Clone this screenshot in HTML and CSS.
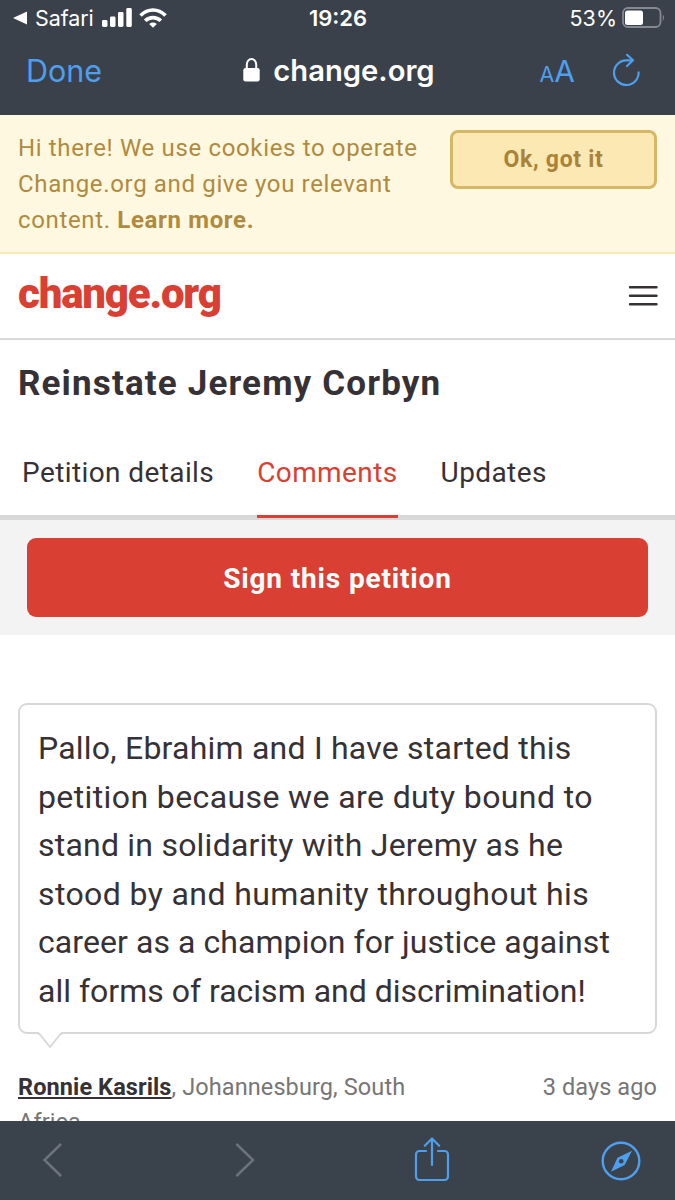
FILE: index.html
```
<!DOCTYPE html>
<html lang="en">
<head>
  <meta charset="UTF-8">
  <meta name="viewport" content="width=device-width, initial-scale=1.0">
  <title>Reinstate Jeremy Corbyn</title>
  <link rel="stylesheet" href="styles.css">
</head>
<body>
  <div class="browser-top">
    <div class="status-bar">
      <div class="status-left">
        <svg width="14" height="14" viewBox="0 0 14 14"><path d="M0 7L14 .5v13z" fill="#fff"/></svg>
        <span class="back-app">Safari</span>
        <svg class="signal" width="30" height="20" viewBox="0 0 30 20" fill="#fff">
          <rect x="0" y="12" width="5.5" height="7" rx="1.4"/>
          <rect x="8" y="8.5" width="5.5" height="10.5" rx="1.4"/>
          <rect x="16" y="4" width="5.5" height="15" rx="1.4"/>
          <rect x="24.3" y="0" width="5.5" height="19" rx="1.4"/>
        </svg>
        <svg width="28" height="20" viewBox="0 0 28 20" fill="none" stroke="#fff" stroke-width="3.6">
          <path d="M1.5 7.500Q7 2 14 2t12.500 5.500"/>
          <path d="M6.200 12.800Q9.500 9.600 14 9.600t7.800 3.200"/>
          <path d="M14 19.800l-3.800-3.900q3.800-2.800 7.600 0z" fill="#fff" stroke="none"/>
        </svg>
      </div>
      <div class="time">19:26</div>
      <div class="status-right">
        <span>53%</span>
        <svg width="43" height="22" viewBox="0 0 43 22">
          <rect x="1" y="1" width="37.5" height="19" rx="5" fill="none" stroke="#858a91" stroke-width="1.8"/>
          <rect x="3" y="3.5" width="18" height="14.5" rx="2.5" fill="#fff"/>
          <path d="M40.800 7.500q2.400 3 0 6.500z" fill="#858a91"/>
        </svg>
      </div>
    </div>
    <div class="address-bar">
      <a class="done">Done</a>
      <div class="address">
        <svg width="17" height="24" viewBox="0 0 17 24">
          <path d="M3.800 11V6.500a4.700 5.500 0 0 1 9.400 0v4.500" fill="none" stroke="#fff" stroke-width="2"/>
          <rect x=".3" y="10" width="16.4" height="13.5" rx="2.2" fill="#fff"/>
        </svg>
        <span>change.org</span>
      </div>
      <div class="address-tools">
        <span class="text-size"><small>A</small>A</span>
        <svg width="30" height="34" viewBox="0 0 30 34" fill="none" stroke="#4e9fee" stroke-width="2.2" stroke-linecap="round" stroke-linejoin="round">
          <path d="M15 1.800l6 5.500-6 5.700"/>
          <path d="M20.500 7.400H14A12.300 12.300 0 1 0 26.600 19.400"/>
        </svg>
      </div>
    </div>
  </div>

  <main class="page">
    <div class="cookie-banner">
      <p>Hi there! We use cookies to operate<br>Change.org and give you relevant<br>content. <b>Learn more.</b></p>
      <button>Ok, got it</button>
    </div>

    <header class="site-header">
      <div class="logo">change.org</div>
      <svg width="30" height="22" viewBox="0 0 30 22" stroke="#363135" stroke-width="2.4" stroke-linecap="round">
        <path d="M2 2.300h26.500M2 10.800h26.500M2 19.300h26.500"/>
      </svg>
    </header>

    <h1>Reinstate Jeremy Corbyn</h1>

    <nav class="tabs">
      <a>Petition details</a>
      <a class="active">Comments</a>
      <a>Updates</a>
    </nav>

    <div class="sign">
      <button>Sign this petition</button>
    </div>

    <section class="comment">
      <div class="bubble">
        <p>
          <span>Pallo, Ebrahim and I have started this</span>
          <span>petition because we are duty bound to</span>
          <span>stand in solidarity with Jeremy as he</span>
          <span>stood by and humanity throughout his</span>
          <span>career as a champion for justice against</span>
          <span>all forms of racism and discrimination!</span>
        </p>
        <svg class="tail" width="24" height="17" viewBox="0 0 24 17">
          <path d="M1 0h22v3L12 15.500 1 3z" fill="#fff"/>
          <path d="M0 2h1.500L12 15l10.500-13H24" fill="none" stroke="#d8d8d8" stroke-width="1.8"/>
        </svg>
      </div>
      <div class="meta">
        <p><b>Ronnie Kasrils</b>, Johannesburg, South<br>Africa</p>
        <span>3 days ago</span>
      </div>
    </section>
  </main>

  <footer class="toolbar">
    <svg width="22" height="36" viewBox="0 0 22 36" fill="none" stroke="#6b727a" stroke-width="2.5" stroke-linecap="round"><path d="M18.500 2.500L2.500 18l16 15.500"/></svg>
    <svg width="22" height="36" viewBox="0 0 22 36" fill="none" stroke="#6b727a" stroke-width="2.5" stroke-linecap="round"><path d="M3 2.500l16 15.500L3 33.500"/></svg>
    <svg width="36" height="46" viewBox="0 0 36 46" fill="none" stroke="#4e9fee" stroke-width="2.2" stroke-linecap="round" stroke-linejoin="round">
      <path d="M12 15H5.500a3.500 3.500 0 0 0-3.500 3.500v22A3.500 3.500 0 0 0 5.500 44h25a3.500 3.500 0 0 0 3.500-3.500v-22a3.500 3.500 0 0 0-3.500-3.500H24"/>
      <path d="M18 29V2.500M10.800 9.700L18 2.500l7.200 7.200"/>
    </svg>
    <svg width="40" height="40" viewBox="0 0 40 40">
      <circle cx="20" cy="20" r="18.3" fill="none" stroke="#4e9fee" stroke-width="2.4"/>
      <path d="M31 9.700L23.700 24 10 30.700 16.500 16.700z" fill="#4e9fee"/>
      <circle cx="20.2" cy="20.3" r="2.3" fill="#3a424c"/>
    </svg>
  </footer>
</body>
</html>
```
FILE: styles.css
```
* {
  box-sizing: border-box;
}
body {
  margin: 0;
  height: 1200px;
  display: flex;
  flex-direction: column;
  overflow: hidden;
  font-family: Roboto, sans-serif;
  color: #363135;
  background: #fff;
}
p, h1 {
  margin: 0;
}
svg {
  display: block;
  flex: none;
}
button {
  font-family: inherit;
  font-weight: 700;
  padding: 0;
}

/* browser chrome */
.browser-top {
  flex: none;
  height: 115px;
  background: #3a414b;
  color: #fff;
  font-family: Inter, sans-serif;
}
.status-bar {
  display: grid;
  grid-template-columns: 1fr auto 1fr;
  align-items: center;
  height: 36px;
  padding: 0 12px 0 13px;
  font-size: 21.5px;
}
.status-left, .status-right {
  display: flex;
  align-items: center;
}
.status-right {
  justify-content: flex-end;
  gap: 5px;
  margin-right: -2px;
}
.back-app {
  margin-left: 8px;
  letter-spacing: -0.1px;
}
.signal {
  margin: 0 7px 0 8px;
}
.time {
  font-size: 22px;
  font-weight: 600;
}
.address-bar {
  display: grid;
  grid-template-columns: 1fr auto 1fr;
  align-items: center;
  height: 70px;
  padding: 0 33px 0 26px;
}
.done {
  font-size: 30.5px;
  margin-top: -2px;
  color: #4e9fee;
}
.address {
  display: flex;
  align-items: center;
  gap: 13px;
  margin: -2px -5px 0 5px;
  font-size: 29.2px;
  font-weight: 600;
}
.address-tools {
  display: flex;
  justify-content: flex-end;
  align-items: center;
  gap: 37px;
}
.address-tools svg {
  margin-top: -2px;
}
.text-size {
  font-size: 30px;
  color: #4e9fee;
}
.text-size small {
  font-size: 21.5px;
}

/* page content */
.page {
  flex: 1;
  min-height: 0;
  overflow: hidden;
}
.cookie-banner {
  display: flex;
  justify-content: space-between;
  align-items: flex-start;
  height: 139px;
  padding: 15px 18px;
  background: #fef8e0;
  border-bottom: 2px solid #f8ebb8;
  color: #b08a3e;
}
.cookie-banner p {
  font-size: 24px;
  line-height: 36px;
  letter-spacing: 0.65px;
}
.cookie-banner button {
  width: 207px;
  height: 59px;
  border: 3px solid #d6b765;
  border-radius: 8px;
  background: #fce8b2;
  color: #a9833a;
  font-size: 23px;
  letter-spacing: 0.7px;
}
.site-header {
  display: flex;
  justify-content: space-between;
  align-items: center;
  height: 86px;
  padding: 0 17px 0 18px;
  border-bottom: 2px solid #d8d8d8;
}
.logo {
  margin-top: -6px;
  font-size: 42px;
  font-weight: 900;
  color: #da3f33;
  letter-spacing: -1.2px;
}
h1 {
  padding: 20px 18px 0;
  height: 86px;
  font-size: 35px;
  line-height: 48px;
  letter-spacing: 1.15px;
}
.tabs {
  display: flex;
  gap: 43px;
  height: 94px;
  padding: 0 22px;
  border-bottom: 5px solid #d8d8d8;
  font-size: 28px;
  line-height: 94px;
  letter-spacing: 0.4px;
}
.tabs .active {
  height: 92px;
  color: #da3f33;
  border-bottom: 3px solid #da3f33;
}
.sign {
  height: 115px;
  padding: 18px 27px;
  background: #f3f3f3;
}
.sign button {
  width: 100%;
  height: 79px;
  padding-top: 2px;
  border: 0;
  border-radius: 9px;
  background: #da3f33;
  color: #fff;
  font-size: 28px;
  letter-spacing: 0.85px;
}
.comment {
  padding: 68px 18px 0;
}
.bubble {
  position: relative;
  height: 331px;
  padding: 19px 18px;
  border: 2px solid #d8d8d8;
  border-radius: 9px;
  font-size: 32px;
  line-height: 48.6px;
  white-space: nowrap;
}
.bubble span {
  display: block;
  letter-spacing: 0.22px;
}
.bubble span:nth-child(even) {
  letter-spacing: 0.39px;
}
.bubble span:nth-child(5) {
  letter-spacing: 0.07px;
}
.bubble span:nth-child(6) {
  letter-spacing: 0;
}
.tail {
  position: absolute;
  left: 18px;
  bottom: -17px;
}
.meta {
  display: flex;
  justify-content: space-between;
  margin-top: 36px;
  font-size: 23.5px;
  line-height: 35px;
  letter-spacing: 0.1px;
  color: #767676;
}
.meta b {
  color: #363135;
  text-decoration: underline;
}
.toolbar {
  flex: none;
  display: flex;
  height: 79px;
  background: #3a424c;
}
.toolbar svg:nth-child(1) { margin: 21px 0 0 42px; }
.toolbar svg:nth-child(2) { margin: 21px 0 0 170px; }
.toolbar svg:nth-child(3) { margin: 15px 0 0 158px; }
.toolbar svg:nth-child(4) { margin: 20px 0 0 151px; }
```
